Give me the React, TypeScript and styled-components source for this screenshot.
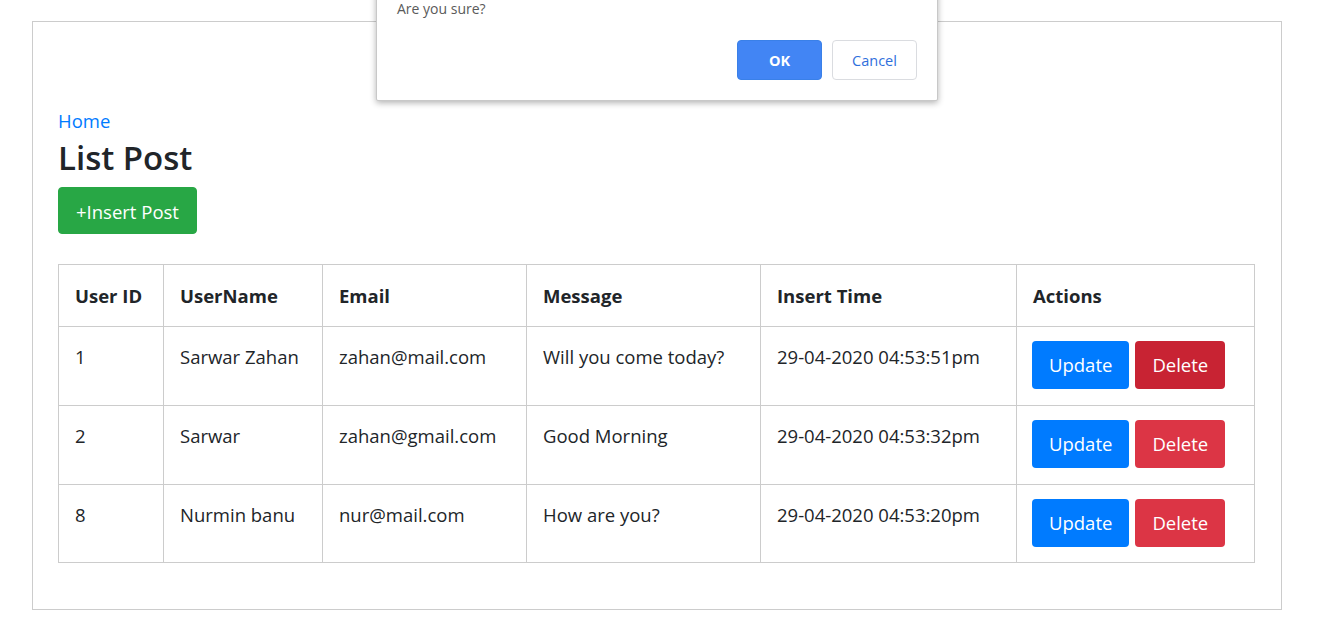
import React from 'react';
import styled, { createGlobalStyle } from 'styled-components';

const GlobalStyle = createGlobalStyle`
  html, body {
    margin: 0;
    padding: 0;
    background: #fff;
  }
  body {
    font-family: "Open Sans", "Noto Sans", "Liberation Sans", sans-serif;
    color: #212529;
    overflow: hidden;
  }
  * {
    box-sizing: border-box;
  }
`;

interface Post {
  id: number;
  username: string;
  email: string;
  message: string;
  time: string;
}

const posts: Post[] = [
  { id: 1, username: 'Sarwar Zahan', email: 'zahan@mail.com', message: 'Will you come today?', time: '29-04-2020 04:53:51pm' },
  { id: 2, username: 'Sarwar', email: 'zahan@gmail.com', message: 'Good Morning', time: '29-04-2020 04:53:32pm' },
  { id: 8, username: 'Nurmin banu', email: 'nur@mail.com', message: 'How are you?', time: '29-04-2020 04:53:20pm' },
];

const columns = [
  { title: 'User ID', width: 105 },
  { title: 'UserName', width: 159 },
  { title: 'Email', width: 204 },
  { title: 'Message', width: 234 },
  { title: 'Insert Time', width: 256 },
  { title: 'Actions', width: 238 },
];

const App = () => {
  return (
    <>
      <GlobalStyle />
      <Page>
        <Container>
          <HomeLink href="#">Home</HomeLink>
          <Title>List Post</Title>
          <InsertButton type="button">+Insert Post</InsertButton>
          <Table>
            <colgroup>
              {columns.map(c => (
                <Col key={c.title} $width={c.width} />
              ))}
            </colgroup>
            <thead>
              <tr>
                {columns.map(c => (
                  <Th key={c.title}>{c.title}</Th>
                ))}
              </tr>
            </thead>
            <tbody>
              {posts.map((p, i) => (
                <Row key={p.id}>
                  <Td>{p.id}</Td>
                  <Td>{p.username}</Td>
                  <Td>{p.email}</Td>
                  <Td>{p.message}</Td>
                  <Td>{p.time}</Td>
                  <Td>
                    <Actions>
                      <ActionButton type="button" $variant="update">Update</ActionButton>
                      <ActionButton type="button" $variant={i === 0 ? 'deleteActive' : 'delete'}>
                        Delete
                      </ActionButton>
                    </Actions>
                  </Td>
                </Row>
              ))}
            </tbody>
          </Table>
        </Container>

        <Dialog role="dialog">
          <DialogText>Are you sure?</DialogText>
          <DialogButtons>
            <DialogButton type="button" $primary>OK</DialogButton>
            <DialogButton type="button">Cancel</DialogButton>
          </DialogButtons>
        </Dialog>
      </Page>
    </>
  );
};

const Page = styled.div`
  position: relative;
  padding: 21px 0 0 32px;
`;

const Container = styled.div`
  width: 1250px;
  border: 1px solid #cccccc;
  padding: 85px 26px 46px 25px;
  display: flex;
  flex-direction: column;
  align-items: flex-start;
`;

const HomeLink = styled.a`
  color: #007bff;
  text-decoration: none;
  font-size: 18.5px;
  line-height: 28.5px;
`;

const Title = styled.h2`
  margin: 0 0 7px;
  font-size: 33px;
  font-weight: 600;
  line-height: 44px;
  color: #212529;
`;

const InsertButton = styled.button`
  font-family: inherit;
  font-size: 18.5px;
  line-height: 28px;
  padding: 10px 17px 7px;
  height: 47px;
  border: 1px solid #28a745;
  border-radius: 4px;
  background: #28a745;
  color: #fff;
  cursor: pointer;
`;

const Table = styled.table`
  margin-top: 30px;
  width: 1196px;
  border-collapse: collapse;
  table-layout: fixed;
  font-size: 18.5px;
`;

const Col = styled.col<{ $width: number }>`
  width: ${p => p.$width}px;
`;

const Th = styled.th`
  border: 1px solid #cccccc;
  padding: 17px 16px 16px;
  text-align: left;
  font-weight: 700;
  line-height: 28.5px;
  vertical-align: top;
`;

const Td = styled.td`
  border: 1px solid #cccccc;
  padding: 16px 16px 14px;
  line-height: 28.5px;
  vertical-align: top;
  height: 79px;
`;

const Row = styled.tr`
  &:last-child ${Td} {
    height: 78px;
  }
`;

const Actions = styled.div`
  display: flex;
  gap: 6px;
  margin: -2px 0 0 -1px;
`;

const variantColors: Record<string, string> = {
  update: '#007bff',
  delete: '#dc3545',
  deleteActive: '#c82333',
};

const ActionButton = styled.button<{ $variant: string }>`
  font-family: inherit;
  font-size: 18.5px;
  line-height: 28px;
  height: 48px;
  padding: 0 17px;
  border: none;
  border-radius: 4px;
  background: ${p => variantColors[p.$variant]};
  color: #fff;
  cursor: pointer;
`;

const Dialog = styled.div`
  position: absolute;
  top: -30px;
  left: 376px;
  width: 562px;
  height: 131px;
  background: #fff;
  border: 1px solid #c8c8c8;
  border-radius: 2px;
  box-shadow: 0 2px 6px rgba(0, 0, 0, 0.3);
  padding: 28px 20px 20px 20px;
  display: flex;
  flex-direction: column;
  font-family: "Open Sans", "Noto Sans", sans-serif;
`;

const DialogText = styled.div`
  font-size: 14px;
  line-height: 20px;
  color: #5a5a5a;
`;

const DialogButtons = styled.div`
  margin-top: auto;
  display: flex;
  justify-content: flex-end;
  gap: 10px;
`;

const DialogButton = styled.button<{ $primary?: boolean }>`
  width: 85px;
  height: 40px;
  border-radius: 4px;
  font-family: inherit;
  font-size: 14.5px;
  font-weight: ${p => (p.$primary ? 700 : 500)};
  border: 1px solid ${p => (p.$primary ? '#3a80e8' : '#dadce0')};
  background: ${p => (p.$primary ? '#4285f4' : '#fff')};
  color: ${p => (p.$primary ? '#fff' : '#2f6fdc')};
  cursor: pointer;
`;

export default App;
